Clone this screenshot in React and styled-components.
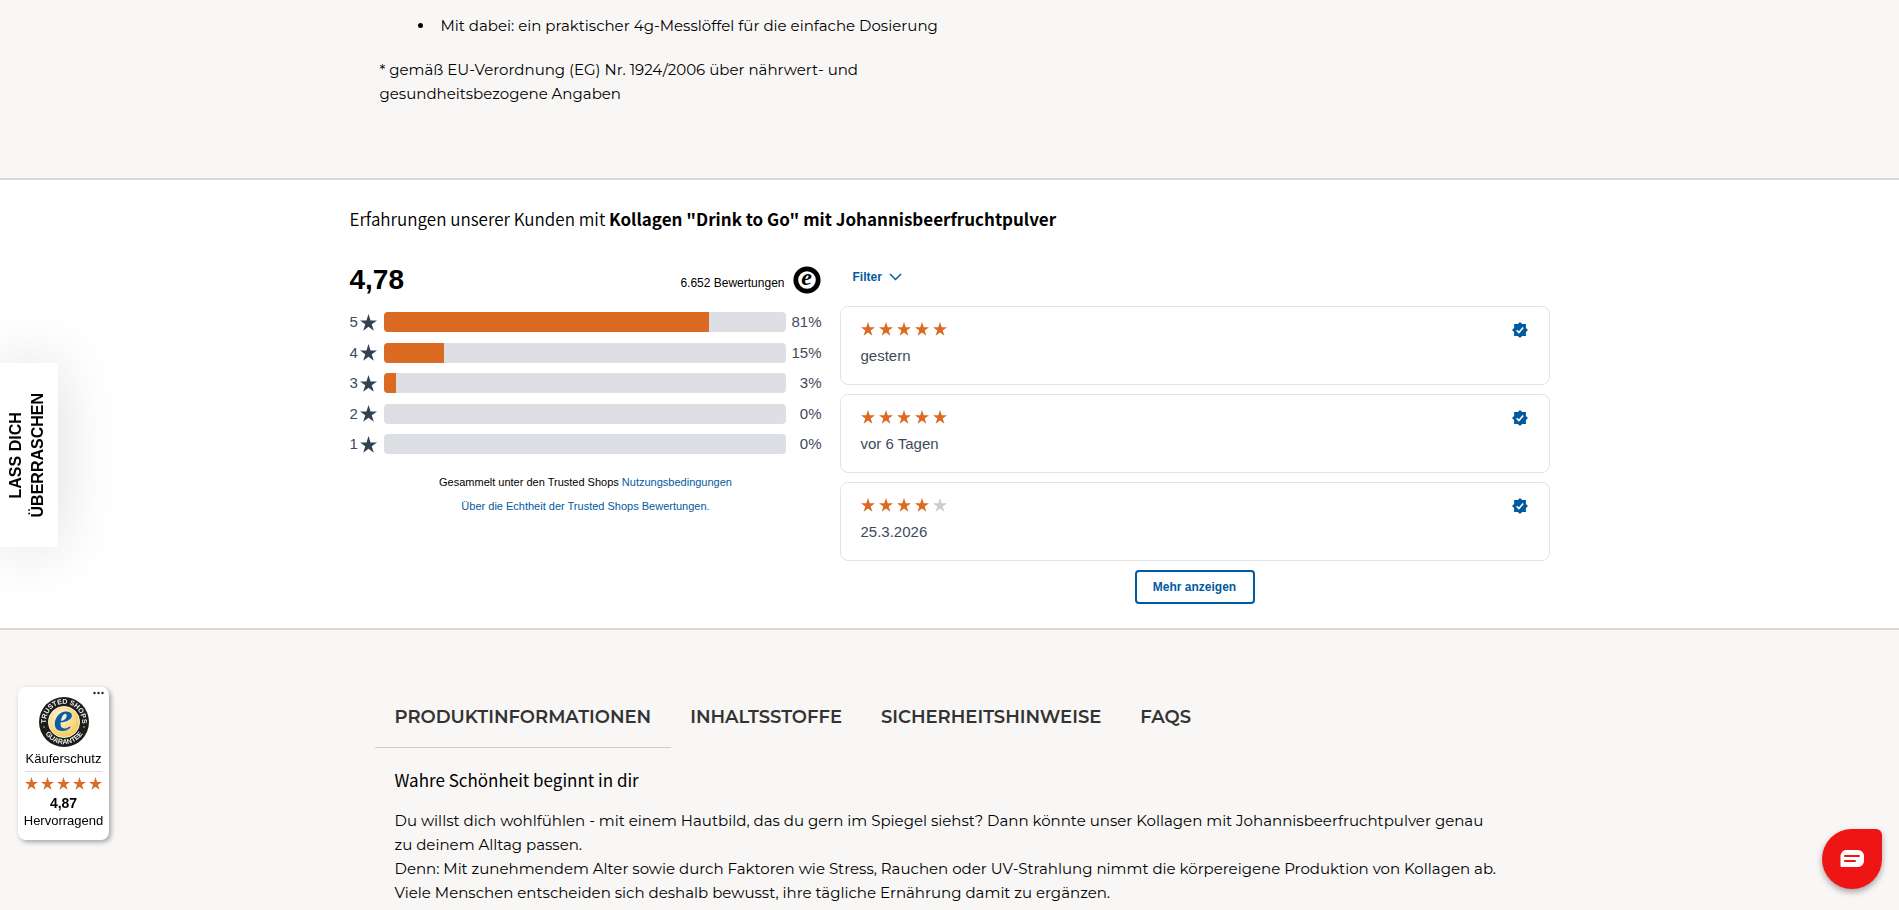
import React, { useState } from 'react';
import styled, { createGlobalStyle } from 'styled-components';

const GlobalStyle = createGlobalStyle`
  * {
    box-sizing: border-box;
  }

  body {
    margin: 0;
    background: #f8f7f5;
    color: #000;
    font-family: Montserrat, Inter, sans-serif;
    font-size: 15px;
    line-height: 24px;
  }
`;

const arial = '"Liberation Sans", Arial, sans-serif';
const sourceSans = '"Source Sans Pro", "Noto Sans CJK SC", sans-serif';

const Container = styled.div`
  max-width: 1200px;
  margin: 0 auto;
`;

const Description = styled(Container)`
  height: 178px;
  padding: 14px 30px 0;
`;

const FeatureList = styled.ul`
  margin: 0 0 20px;
  padding: 0 0 0 55px;

  li {
    padding-left: 6px;
  }
`;

const Footnote = styled.p`
  max-width: 500px;
  margin: 0;
`;

const Reviews = styled.section`
  background: #fff;
  border: solid #ddd6d0;
  border-width: 2px 0;
  padding: 27px 0 24px;
`;

const ReviewsTitle = styled.h2`
  margin: 0;
  font-family: ${sourceSans};
  font-size: 17px;
  font-weight: 350;
  line-height: 24px;

  strong {
    font-weight: 700;
  }
`;

const ReviewsGrid = styled.div`
  display: grid;
  grid-template-columns: 472px 1fr;
  column-gap: 18px;
  padding-top: 31px;
  font-family: ${arial};
`;

const Summary = styled.div`
  display: flex;
  flex-direction: column;
`;

const SummaryHead = styled.div`
  display: flex;
  align-items: center;
  gap: 8px;
  height: 36px;
  margin-bottom: 14px;
  padding-right: 1px;
`;

const Grade = styled.span`
  flex: 1;
  font-size: 28px;
  font-weight: 700;
  line-height: 32px;
`;

const ReviewCount = styled.span`
  font-size: 12px;
  line-height: 16px;
  padding-top: 5px;
`;

const Distribution = styled.div`
  display: flex;
  flex-direction: column;
  justify-content: space-between;
  height: 142px;
`;

const DistributionRow = styled.div`
  display: grid;
  grid-template-columns: 10px 18px 1fr 36px;
  align-items: center;
  height: 20px;
  color: #3f4a5c;
  font-size: 15px;
  line-height: 20px;
`;

const Percent = styled.span`
  text-align: right;
`;

const Bar = styled.div`
  height: 20px;
  margin-left: 6px;
  border-radius: 4px;
  background: #dedfe4;
  overflow: hidden;
`;

const BarFill = styled.div`
  height: 100%;
  background: #db6b22;
`;

const Legal = styled.p`
  margin: 16px 0 0;
  text-align: center;
  font-size: 11px;
  font-weight: 500;
  line-height: 24px;

  a {
    color: #005aa0;
    text-decoration: none;
  }
`;

const ReviewList = styled.div`
  display: flex;
  flex-direction: column;
  gap: 9px;
`;

const FilterButton = styled.button`
  align-self: flex-start;
  display: flex;
  align-items: center;
  gap: 7px;
  height: 28px;
  margin-bottom: 7px;
  padding: 2px 13px 0;
  border: 0;
  background: none;
  color: #005aa0;
  font: 700 12px ${arial};
`;

const Card = styled.article`
  display: flex;
  justify-content: space-between;
  height: 79px;
  padding: 15px 21px 0 20px;
  border: 1px solid #e3e3e5;
  border-radius: 8px;
  color: #3f4a5c;
  font-size: 15px;
  line-height: 20px;
`;

const StarRow = styled.div`
  display: flex;
  gap: ${props => props.$gap}px;
  margin-bottom: ${props => props.$space}px;

  svg {
    display: block;
  }
`;

const MoreButton = styled.button`
  align-self: center;
  min-width: 120px;
  height: 34px;
  padding: 0 16px;
  border: 2px solid #005aa0;
  border-radius: 4px;
  background: #fff;
  color: #005aa0;
  font: 700 12px ${arial};
`;

const Details = styled(Container)`
  padding: 54px 25px 0;
`;

const TabList = styled.div`
  display: flex;
`;

const Tab = styled.button`
  height: 64px;
  padding: 2px 20px 0;
  border: 0;
  border-bottom: 1px solid ${props => (props.$active ? '#ccc' : 'transparent')};
  background: none;
  color: #333;
  font: 600 18px Montserrat, Inter, sans-serif;

  & + & {
    margin-left: -1px;
  }
`;

const TabPanel = styled.div`
  padding: 20px 20px 0;

  h3 {
    margin: 0 0 17px;
    font-family: ${sourceSans};
    font-size: 17px;
    font-weight: 400;
    line-height: 24px;
  }

  p {
    margin: 0;
  }
`;

const SurpriseTab = styled.button`
  position: fixed;
  left: 0;
  top: 363px;
  width: 58px;
  height: 184px;
  display: flex;
  align-items: center;
  justify-content: center;
  padding: 0 5px 0 0;
  border: 0;
  border-radius: 0 4px 4px 0;
  background: #fff;
  box-shadow: 0 0 64px rgba(0, 0, 0, 0.14);
  color: #000;
  font: 700 16px/22px ${arial};

  span {
    writing-mode: vertical-rl;
    transform: rotate(180deg);
  }
`;

const TrustBadge = styled.aside`
  position: fixed;
  left: 18px;
  top: 687px;
  width: 91px;
  height: 153px;
  padding: 10px 7px 0;
  display: flex;
  flex-direction: column;
  align-items: center;
  border-radius: 8px;
  background: #fff;
  box-shadow: 2px 2px 5px rgba(0, 0, 0, 0.35);
  font: 13px/18px ${arial};
`;

const BadgeMenu = styled.button`
  position: absolute;
  right: 5px;
  top: 3px;
  padding: 0;
  border: 0;
  background: none;
  line-height: 0;
`;

const BadgeLabel = styled.span`
  width: 100%;
  margin: 3px 0 5px;
  padding-bottom: 3px;
  border-bottom: 1px solid #ddd;
  text-align: center;
`;

const BadgeGrade = styled.strong`
  font-size: 14px;
`;

const ChatButton = styled.button`
  position: fixed;
  right: 17px;
  bottom: 21px;
  width: 60px;
  height: 60px;
  display: flex;
  align-items: center;
  justify-content: center;
  padding: 0;
  border: 0;
  border-radius: 50% 6px 50% 50%;
  background: #ef1515;
  box-shadow: 0 3px 6px rgba(0, 0, 0, 0.35);
`;

const Logo = styled.svg`
  flex: none;
  overflow: visible;
`;

const Star = ({ size = 14, color = '#db6b22' }) => (
  <svg width={size} height={size} viewBox="0 0 24 24" fill={color} aria-hidden="true">
    <path d="M12 0l2.9 9.1H24l-7.4 5.4 2.9 9.2L12 18.1l-7.5 5.6 2.9-9.2L0 9.1h9.1z" />
  </svg>
);

const Stars = ({ rating, size, gap, space }) => (
  <StarRow $gap={gap} $space={space} role="img" aria-label={`${rating} von 5 Sternen`}>
    {[1, 2, 3, 4, 5].map(n => (
      <Star key={n} size={size} color={n <= rating ? '#db6b22' : '#ccc'} />
    ))}
  </StarRow>
);

const TrustedMark = () => (
  <Logo width="28" height="28" viewBox="0 0 28 28" aria-label="Trusted Shops">
    <circle cx="14" cy="14" r="11.2" fill="#fff" stroke="#000" strokeWidth="4.8" />
    <text x="13.6" y="19.4" textAnchor="middle" fontFamily="Liberation Serif, serif" fontSize="24" fontStyle="italic" fontWeight="700">e</text>
  </Logo>
);

const VerifiedIcon = () => (
  <svg width="16" height="16" viewBox="0 0 16 16" aria-label="Verifiziert">
    <path fill="#005aa0" d="M8 0l2.1 2.1h3.8v3.8L16 8l-2.1 2.1v3.8h-3.8L8 16l-2.1-2.1H2.1v-3.8L0 8l2.1-2.1V2.1h3.8z" />
    <path d="M4.6 8.2l2.3 2.4 4.3-5.2" fill="none" stroke="#fff" strokeWidth="1.6" />
  </svg>
);

const Seal = () => (
  <Logo width="50" height="50" viewBox="0 0 50 50" aria-label="Trusted Shops Guarantee">
    <defs>
      <radialGradient id="gold" cx="0.4" cy="0.35" r="0.7">
        <stop offset="0" stopColor="#fff6d8" />
        <stop offset="1" stopColor="#f3c653" />
      </radialGradient>
      <path id="arcTop" d="M7.3 28A18 18 0 1 1 42.7 28" />
      <path id="arcBottom" d="M3.8 31A22 22 0 0 0 46.2 31" />
    </defs>
    <circle cx="25" cy="25" r="25" fill="#1d1d1b" />
    <circle cx="25" cy="25" r="15.6" fill="url(#gold)" stroke="#fff" strokeWidth="0.8" />
    <g fill="#eee" fontFamily="Liberation Sans, sans-serif" fontSize="7" fontWeight="700" textAnchor="middle">
      <text><textPath href="#arcTop" startOffset="50%">TRUSTED SHOPS</textPath></text>
      <text><textPath href="#arcBottom" startOffset="50%">GUARANTEE</textPath></text>
    </g>
    <circle cx="5" cy="30" r="0.8" fill="#f3c653" />
    <circle cx="45" cy="30" r="0.8" fill="#f3c653" />
    <text x="24.4" y="34.4" textAnchor="middle" fill="#0a5ba8" fontFamily="Liberation Serif, serif" fontSize="43" fontStyle="italic" fontWeight="700">e</text>
  </Logo>
);

const distribution = [
  { stars: 5, percent: 81 },
  { stars: 4, percent: 15 },
  { stars: 3, percent: 3 },
  { stars: 2, percent: 0 },
  { stars: 1, percent: 0 },
];

const reviews = [
  { rating: 5, date: 'gestern' },
  { rating: 5, date: 'vor 6 Tagen' },
  { rating: 4, date: '25.3.2026' },
];

const tabs = ['PRODUKTINFORMATIONEN', 'INHALTSSTOFFE', 'SICHERHEITSHINWEISE', 'FAQS'];

const App = () => {
  const [activeTab, setActiveTab] = useState(tabs[0]);

  return (
    <>
      <GlobalStyle />
      <main>
        <Description>
          <FeatureList>
            <li>Mit dabei: ein praktischer 4g-Messlöffel für die einfache Dosierung</li>
          </FeatureList>
          <Footnote>
            * gemäß EU-Verordnung (EG) Nr. 1924/2006 über nährwert- und gesundheitsbezogene Angaben
          </Footnote>
        </Description>

        <Reviews>
          <Container>
            <ReviewsTitle>
              Erfahrungen unserer Kunden mit <strong>Kollagen "Drink to Go" mit Johannisbeerfruchtpulver</strong>
            </ReviewsTitle>
            <ReviewsGrid>
              <Summary>
                <SummaryHead>
                  <Grade>4,78</Grade>
                  <ReviewCount>6.652 Bewertungen</ReviewCount>
                  <TrustedMark />
                </SummaryHead>
                <Distribution>
                  {distribution.map(({ stars, percent }) => (
                    <DistributionRow key={stars}>
                      <span>{stars}</span>
                      <Star size={17} color="#334155" />
                      <Bar>
                        <BarFill style={{ width: `${percent}%` }} />
                      </Bar>
                      <Percent>{percent}%</Percent>
                    </DistributionRow>
                  ))}
                </Distribution>
                <Legal>
                  Gesammelt unter den Trusted Shops <a href="#nutzungsbedingungen">Nutzungsbedingungen</a>
                  <br />
                  <a href="#echtheit">Über die Echtheit der Trusted Shops Bewertungen.</a>
                </Legal>
              </Summary>

              <ReviewList>
                <FilterButton type="button">
                  Filter
                  <svg width="13" height="8" viewBox="0 0 13 8" fill="none" stroke="currentColor" strokeWidth="1.5">
                    <path d="M1 1l5.5 5.5L12 1" />
                  </svg>
                </FilterButton>
                {reviews.map(({ rating, date }) => (
                  <Card key={date}>
                    <div>
                      <Stars rating={rating} size={14} gap={4} space={10} />
                      {date}
                    </div>
                    <VerifiedIcon />
                  </Card>
                ))}
                <MoreButton type="button">Mehr anzeigen</MoreButton>
              </ReviewList>
            </ReviewsGrid>
          </Container>
        </Reviews>

        <Details>
          <TabList role="tablist">
            {tabs.map(tab => (
              <Tab
                key={tab}
                type="button"
                role="tab"
                aria-selected={tab === activeTab}
                $active={tab === activeTab}
                onClick={() => setActiveTab(tab)}
              >
                {tab}
              </Tab>
            ))}
          </TabList>
          <TabPanel role="tabpanel">
            <h3>Wahre Schönheit beginnt in dir</h3>
            <p>
              Du willst dich wohlfühlen - mit einem Hautbild, das du gern im Spiegel siehst? Dann könnte unser Kollagen mit Johannisbeerfruchtpulver genau zu deinem Alltag passen.
              <br />
              Denn: Mit zunehmendem Alter sowie durch Faktoren wie Stress, Rauchen oder UV-Strahlung nimmt die körpereigene Produktion von Kollagen ab. Viele Menschen entscheiden sich deshalb bewusst, ihre tägliche Ernährung damit zu ergänzen.
            </p>
          </TabPanel>
        </Details>
      </main>

      <SurpriseTab type="button">
        <span>
          LASS DICH
          <br />
          ÜBERRASCHEN
        </span>
      </SurpriseTab>

      <TrustBadge>
        <BadgeMenu type="button" aria-label="Menü">
          <svg width="11" height="6" viewBox="0 0 11 6" fill="#222">
            <circle cx="1.5" cy="3" r="1.2" />
            <circle cx="5.5" cy="3" r="1.2" />
            <circle cx="9.5" cy="3" r="1.2" />
          </svg>
        </BadgeMenu>
        <Seal />
        <BadgeLabel>Käuferschutz</BadgeLabel>
        <Stars rating={5} size={13} gap={3} space={4} />
        <BadgeGrade>4,87</BadgeGrade>
        <span>Hervorragend</span>
      </TrustBadge>

      <ChatButton type="button" aria-label="Chat öffnen">
        <svg width="24" height="18" viewBox="0 0 24 18">
          <path fill="#fff" d="M6 0h12a6 6 0 0 1 6 6v5a6 6 0 0 1-6 6H1.5a1 1 0 0 1-1-1V6A6 6 0 0 1 6 0z" />
          <path d="M5 6h14M5 11h10" stroke="#ef1515" strokeWidth="2" strokeLinecap="round" />
        </svg>
      </ChatButton>
    </>
  );
};

export default App;
